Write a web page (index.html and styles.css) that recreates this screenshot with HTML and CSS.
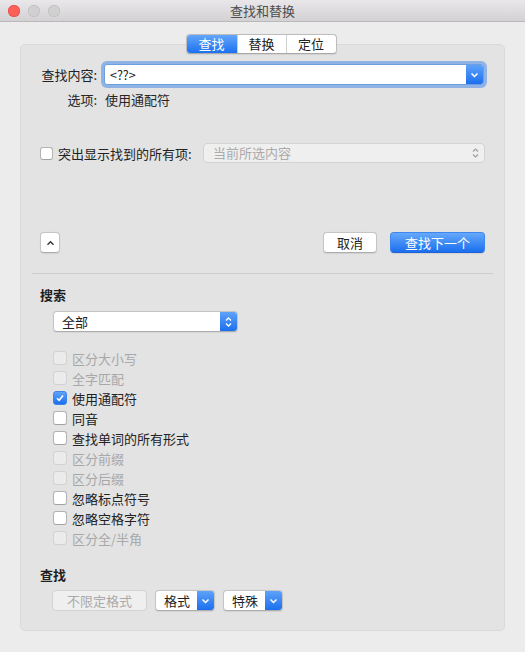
FILE: index.html
```html
<!DOCTYPE html>
<html lang="zh-CN">
<head>
<meta charset="utf-8">
<title>查找和替换</title>
<link rel="stylesheet" href="styles.css">
</head>
<body>
<div class="window">
  <header class="titlebar">
    <div class="lights"><span class="light red"></span><span class="light"></span><span class="light"></span></div>
    <div class="title">查找和替换</div>
    <div></div>
  </header>
  <main class="panel">
    <nav class="tabs">
      <span class="tab active">查找</span>
      <span class="tab">替换</span>
      <span class="tab">定位</span>
    </nav>

    <div class="find-row">
      <span class="label">查找内容:</span>
      <div class="combo">
        <span class="combo-text">&lt;??&gt;</span>
        <span class="blue-seg"><svg width="9" height="6" viewBox="0 0 9 6"><path d="M1.5 1.5 L4.5 4.5 L7.5 1.5" fill="none" stroke="#fff" stroke-width="1.5"/></svg></span>
      </div>
    </div>

    <div class="opt-row">
      <span class="label">选项:</span>
      <span class="opt-value">使用通配符</span>
    </div>

    <div class="hl-row">
      <span class="cb"></span>
      <span class="cb-text">突出显示找到的所有项:</span>
      <div class="popup disabled hl-popup">
        <span class="popup-text">当前所选内容</span>
        <span class="gray-seg"><svg width="7" height="12" viewBox="0 0 7 12"><path d="M1 4.5 L3.5 2 L6 4.5 M1 7.5 L3.5 10 L6 7.5" fill="none" stroke="#a0a0a0" stroke-width="1.2"/></svg></span>
      </div>
    </div>

    <div class="btn-row">
      <div class="btn icon-btn"><svg width="9" height="6" viewBox="0 0 9 6"><path d="M1.5 4.8 L4.5 1.8 L7.5 4.8" fill="none" stroke="#333" stroke-width="1.4"/></svg></div>
      <span class="spacer"></span>
      <div class="btn cancel">取消</div>
      <div class="btn primary next">查找下一个</div>
    </div>

    <div class="sep"></div>

    <div class="section-title search-title">搜索</div>
    <div class="popup search-popup">
      <span class="popup-text">全部</span>
      <span class="blue-seg"><svg width="7" height="12" viewBox="0 0 7 12"><path d="M1 4.5 L3.5 2 L6 4.5 M1 7.5 L3.5 10 L6 7.5" fill="none" stroke="#fff" stroke-width="1.3"/></svg></span>
    </div>

    <ul class="checks">
      <li class="check-item disabled"><span class="cb"></span><span>区分大小写</span></li>
      <li class="check-item disabled"><span class="cb"></span><span>全字匹配</span></li>
      <li class="check-item"><span class="cb checked"><svg width="10" height="10" viewBox="0 0 10 10"><path d="M2 5.3 L4.1 7.4 L8 2.4" fill="none" stroke="#fff" stroke-width="1.6"/></svg></span><span>使用通配符</span></li>
      <li class="check-item"><span class="cb"></span><span>同音</span></li>
      <li class="check-item"><span class="cb"></span><span>查找单词的所有形式</span></li>
      <li class="check-item disabled"><span class="cb"></span><span>区分前缀</span></li>
      <li class="check-item disabled"><span class="cb"></span><span>区分后缀</span></li>
      <li class="check-item"><span class="cb"></span><span>忽略标点符号</span></li>
      <li class="check-item"><span class="cb"></span><span>忽略空格字符</span></li>
      <li class="check-item disabled"><span class="cb"></span><span>区分全/半角</span></li>
    </ul>

    <div class="section-title find-title">查找</div>
    <div class="fmt-row">
      <div class="btn disabled-btn nofmt">不限定格式</div>
      <div class="btn menu-btn"><span class="menu-text">格式</span><span class="blue-seg"><svg width="9" height="6" viewBox="0 0 9 6"><path d="M1.5 1.5 L4.5 4.5 L7.5 1.5" fill="none" stroke="#fff" stroke-width="1.5"/></svg></span></div>
      <div class="btn menu-btn"><span class="menu-text">特殊</span><span class="blue-seg"><svg width="9" height="6" viewBox="0 0 9 6"><path d="M1.5 1.5 L4.5 4.5 L7.5 1.5" fill="none" stroke="#fff" stroke-width="1.5"/></svg></span></div>
    </div>
  </main>
</div>
</body>
</html>
```

FILE: styles.css
```css
* { box-sizing: border-box; }

body {
  margin: 0;
  font-family: "Noto Sans CJK SC", "Noto Sans", sans-serif;
  font-size: 13px;
  color: #222;
  background: #ececec;
}

.window {
  width: 525px;
  height: 652px;
  display: flex;
  flex-direction: column;
  overflow: hidden;
  background: #ececec;
}

.titlebar {
  height: 22px;
  flex: none;
  border-bottom: 1px solid #b9b9b9;
  background: linear-gradient(#e9e7e9, #d3d1d3);
  display: grid;
  grid-template-columns: 1fr auto 1fr;
  align-items: center;
}

.lights {
  display: flex;
  gap: 8px;
  padding-left: 8px;
}

.light {
  width: 12px;
  height: 12px;
  border-radius: 50%;
  background: #d0d0d0;
  box-shadow: inset 0 0 0 0.5px #b8b8b8;
}

.light.red {
  background: #fc5f57;
  box-shadow: inset 0 0 0 0.5px #dc3f38;
}

.title {
  color: #4d4d4d;
  font-size: 13px;
  line-height: 21px;
}

.panel {
  margin: 22px 20px 21px;
  height: 587px;
  flex: none;
  background: #e3e3e3;
  border: 1px solid #d9d9d9;
  border-radius: 5px;
  padding: 0 19px;
  display: flex;
  flex-direction: column;
}

/* tabs */
.tabs {
  align-self: center;
  margin-top: -11px;
  margin-right: 3px;
  display: flex;
  height: 20px;
  border: 1px solid #bdbdbd;
  border-bottom-color: #a9a9a9;
  border-radius: 4px;
  overflow: hidden;
  background: #fff;
  box-shadow: 0 0.5px 1px rgba(0, 0, 0, 0.08);
}

.tab {
  width: 49px;
  text-align: center;
  line-height: 18px;
  color: #222;
}

.tab + .tab {
  border-left: 1px solid #d0d0d0;
}

.tab:nth-child(2) { width: 49px; }
.tab:nth-child(3) { width: 50px; }

.tab.active {
  width: 50px;
  color: #fff;
  background: linear-gradient(#62a6fa, #1c71f0);
}

/* find row */
.find-row {
  margin-top: 10px;
  height: 21px;
  display: flex;
  align-items: center;
  gap: 7px;
}

.label {
  width: 57px;
  text-align: right;
  flex: none;
}

.combo {
  width: 380px;
  height: 21px;
  display: flex;
  background: #fff;
  border: 1px solid #6c9ee0;
  border-radius: 3px;
  box-shadow: 0 0 0 3px #8fb3e4;
  overflow: hidden;
}

.combo-text {
  flex: 1;
  padding-left: 5px;
  line-height: 19px;
  font-size: 12.5px;
}

.blue-seg {
  width: 17px;
  flex: none;
  display: flex;
  align-items: center;
  justify-content: center;
  background: linear-gradient(#5ea2f9, #1b6fef);
}

/* options row */
.opt-row {
  margin-top: 5px;
  height: 20px;
  line-height: 20px;
  display: flex;
  gap: 7px;
  color: #262626;
}

.opt-value { padding-left: 1px; }

/* highlight row */
.hl-row {
  margin-top: 33px;
  height: 20px;
  display: flex;
  align-items: center;
}

.cb {
  width: 13px;
  height: 13px;
  flex: none;
  border-radius: 3px;
  background: #fff;
  border: 1px solid #b3b3b3;
  border-bottom-color: #a2a2a2;
  display: flex;
  align-items: center;
  justify-content: center;
}

.cb-text { margin-left: 5px; }

.popup {
  height: 21px;
  display: flex;
  background: #fff;
  border: 1px solid #c4c4c4;
  border-bottom-color: #adadad;
  border-radius: 4px;
  overflow: hidden;
  box-shadow: 0 0.5px 1px rgba(0, 0, 0, 0.06);
}

.popup-text {
  flex: 1;
  line-height: 19px;
}

.popup.disabled {
  background: #efefef;
  border-color: #d3d3d3;
  color: #ababab;
  box-shadow: none;
}

.hl-popup {
  margin-left: auto;
  width: 282px;
  height: 20px;
}

.hl-popup .popup-text {
  padding-left: 9px;
  line-height: 18px;
}

.gray-seg {
  width: 17px;
  flex: none;
  display: flex;
  align-items: center;
  justify-content: center;
}

/* buttons */
.btn-row {
  margin-top: 69px;
  height: 21px;
  display: flex;
  align-items: stretch;
}

.spacer { flex: 1; }

.btn {
  height: 21px;
  display: flex;
  align-items: center;
  justify-content: center;
  background: #fff;
  border: 1px solid #c5c5c5;
  border-bottom-color: #adadad;
  border-radius: 4px;
  box-shadow: 0 0.5px 1px rgba(0, 0, 0, 0.08);
  line-height: 19px;
  color: #222;
}

.icon-btn { width: 20px; }
.cancel { width: 54px; }

.next {
  width: 95px;
  margin-left: 13px;
}

.btn.primary {
  color: #fff;
  border-color: #3f86ee;
  border-bottom-color: #1f62d6;
  background: linear-gradient(#65a9fb, #1b6fef);
}

.sep {
  margin: 20px -8px 0;
  height: 1px;
  background: #cdcdcd;
}

.section-title {
  font-weight: bold;
  line-height: 18px;
  color: #1e1e1e;
}

.search-title { margin-top: 12px; }

.search-popup {
  margin-top: 7px;
  margin-left: 13px;
  width: 185px;
}

.search-popup .popup-text { padding-left: 8px; }

.checks {
  list-style: none;
  margin: 16px 0 0;
  padding: 0 0 0 13px;
}

.check-item {
  height: 20px;
  display: flex;
  align-items: center;
  gap: 5px;
}

.check-item .cb { width: 14px; height: 14px; }

.check-item.disabled { color: #a8a8a8; }

.check-item.disabled .cb {
  background: #ebebeb;
  border-color: #d2d2d2;
}

.cb.checked {
  background: linear-gradient(#5ea2f9, #1b6fef);
  border-color: #3d83ea;
}

.find-title { margin-top: 18px; }

.fmt-row {
  margin-top: 6px;
  display: flex;
  gap: 8px;
  padding-left: 12px;
}

.nofmt { width: 95px; }

.btn.disabled-btn {
  background: #efefef;
  border-color: #d3d3d3;
  color: #aaaaaa;
  box-shadow: none;
}

.menu-btn {
  width: 60px;
  justify-content: flex-start;
  overflow: hidden;
  align-items: stretch;
}

.menu-text {
  flex: 1;
  padding-left: 8px;
  line-height: 19px;
}
```
